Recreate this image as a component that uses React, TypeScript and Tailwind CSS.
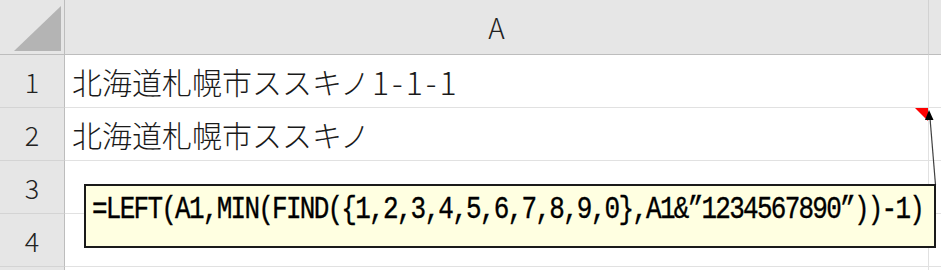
import React from "react";

const cellFont = {
  fontFamily: '"Noto Sans CJK JP", "Noto Sans", sans-serif',
};

export default function App() {
  const rows = [
    { n: "1", text: "北海道札幌市ススキノ", tail: "1-1-1" },
    { n: "2", text: "北海道札幌市ススキノ", tail: "" },
    { n: "3", text: "", tail: "" },
    { n: "4", text: "", tail: "" },
    { n: "", text: "", tail: "" },
  ];
  return (
    <div
      className="relative w-[941px] h-[270px] overflow-hidden bg-white text-[#222]"
      style={cellFont}
    >
      <div className="grid grid-cols-[65px_864px_12px]">
        {/* header row */}
        <div className="h-[55px] bg-[#e6e6e6] border-r border-b border-[#bdbdbd] flex items-end justify-end pr-[2px] pb-[2px]">
          <svg width="48" height="46" viewBox="0 0 48 46">
            <polygon points="47,0 47,45 0,45" fill="#b4b4b4" />
          </svg>
        </div>
        <div className="h-[55px] bg-[#e6e6e6] border-r border-b border-r-[#d2d2d2] border-b-[#bdbdbd] flex items-center justify-center leading-none text-[#222]">
          <span className="text-[28px] font-light">A</span>
        </div>
        <div className="h-[55px] bg-[#e6e6e6] border-b border-[#bdbdbd]" />

        {rows.map((r, i) => (
          <React.Fragment key={i}>
            <div className="h-[53px] bg-[#e6e6e6] border-r border-b border-r-[#bdbdbd] border-b-[#d4d4d4] flex items-center justify-center text-[27px] font-light leading-none text-[#222]">
              {r.n}
            </div>
            <div className="relative h-[53px] border-r border-b border-[#e1e1e1] flex items-center pl-[7px] text-[30px] font-light leading-none whitespace-nowrap text-[#1a1a1a]">
              {r.text}
              {r.tail && <span className="text-[32px] tracking-[3px] ml-[2px]">{r.tail}</span>}
              {i === 1 && (
                <svg
                  className="absolute right-0 top-0"
                  width="13"
                  height="13"
                  viewBox="0 0 13 13"
                >
                  <polygon points="0,0 13,0 13,13" fill="#ff0000" />
                </svg>
              )}
            </div>
            <div className="h-[53px] border-b border-[#e1e1e1]" />
          </React.Fragment>
        ))}
      </div>

      {/* comment connector */}
      <svg
        className="absolute left-0 top-0 pointer-events-none"
        width="941"
        height="270"
        viewBox="0 0 941 270"
      >
        <line x1="930" y1="118" x2="935.5" y2="185" stroke="#404040" strokeWidth="1.2" />
        <polygon points="929,110 925,120 933.5,120" fill="#000" />
      </svg>

      {/* comment box */}
      <div className="absolute left-[84px] top-[184px] w-[852px] h-[64px] border-2 border-[#1a1a1a] bg-[#ffffe1] pl-[6px] pt-[6px]">
        <div className="font-['Liberation_Mono',monospace] text-[26px] leading-[30px] tracking-[-1.75px] text-black whitespace-nowrap origin-top scale-y-[1.2] [-webkit-text-stroke:0.3px_black]">
          =LEFT(A1,MIN(FIND(&#123;1,2,3,4,5,6,7,8,9,0&#125;,A1&amp;”1234567890”))-1)
        </div>
      </div>
    </div>
  );
}
